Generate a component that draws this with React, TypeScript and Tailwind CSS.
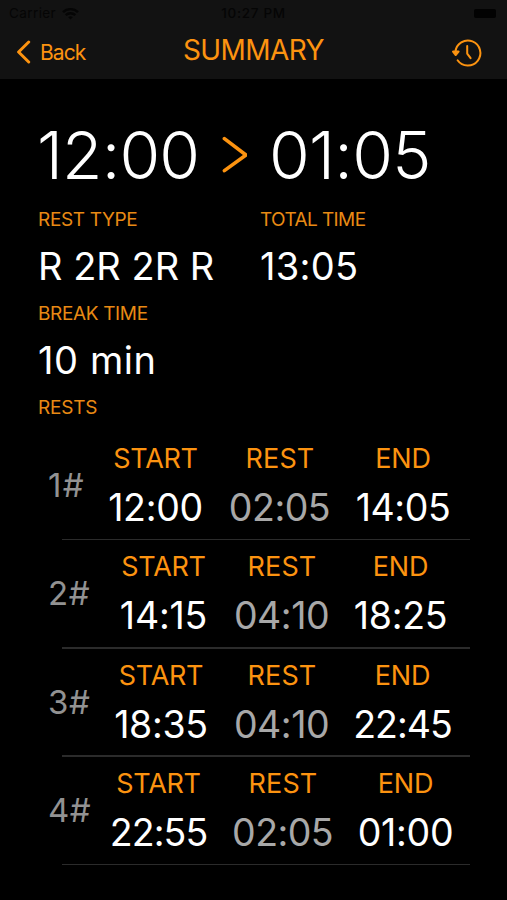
import clsx from "clsx";

type Cell = {
  value: string
  // box of the column and the tracking of the time in it
  box: string
  spacing: string
}

type RestRow = {
  id: number
  label: string
  labelBox: string
  cells: Cell[]
}

const columnTitles = ["START", "REST", "END"]
const titleSpacing = ["tracking-[-0.3px]", "tracking-[0.1px] pl-px", "tracking-[-0.2px]"]

const rests: RestRow[] = [
  {
    id: 1,
    label: "1#",
    labelBox: "w-[61px] tracking-[1.4px]",
    cells: [
      {value: "12:00", box: "w-[93px]", spacing: "tracking-[-0.3px]"},
      {value: "02:05", box: "ml-[28px] w-[99px]", spacing: "tracking-[-0.5px]"},
      {value: "14:05", box: "ml-[27px] w-[94px]", spacing: "tracking-[-0.4px]"},
    ],
  },
  {
    id: 2,
    label: "2#",
    labelBox: "w-[72px] tracking-[0.5px]",
    cells: [
      {value: "14:15", box: "w-[87px]", spacing: "tracking-[-0.2px]"},
      {value: "04:10", box: "ml-[27px] w-[95px]", spacing: "tracking-[-0.5px]"},
      {value: "18:25", box: "ml-[25px] w-[93px]", spacing: "tracking-[-0.3px]"},
    ],
  },
  {
    id: 3,
    label: "3#",
    labelBox: "w-[66px] tracking-[0.5px]",
    cells: [
      {value: "18:35", box: "w-[94px]", spacing: "tracking-[-0.3px]"},
      {value: "04:10", box: "ml-[26px] w-[95px]", spacing: "tracking-[-0.5px]"},
      {value: "22:45", box: "ml-[25px] w-[97px]", spacing: "tracking-[-1px]"},
    ],
  },
  {
    id: 4,
    label: "4#",
    labelBox: "w-[62px] tracking-[0.5px]",
    cells: [
      {value: "22:55", box: "w-[97px]", spacing: "tracking-[-0.9px]"},
      {value: "02:05", box: "ml-[26px] w-[99px]", spacing: "tracking-[-0.6px]"},
      {value: "01:00", box: "ml-[26px] w-[95px]", spacing: "tracking-[-0.3px]"},
    ],
  },
]

const StatusBar = () => (
  <div className="grid h-[27px] grid-cols-3 items-center pl-[9px] pr-[11px] text-[13.5px] text-[#050505]">
    <div className="flex items-center gap-[6px]">
      <span className="tracking-[0.4px]">Carrier</span>
      <svg width="17" height="13" viewBox="0 0 17 13" fill="none" stroke="#050505" strokeWidth="2.4">
        <path d="M1 5.2a10.6 10.6 0 0 1 15 0"/>
        <path d="M3.7 8.2a6.8 6.8 0 0 1 9.6 0"/>
        <path d="M8.5 12.6 6.2 10.3a3.3 3.3 0 0 1 4.6 0Z" fill="#050505" stroke="none"/>
      </svg>
    </div>
    <span className="whitespace-nowrap pl-[2px] text-center font-medium tracking-[0.7px]">10:27 PM</span>
    <div className="h-[9px] w-[22px] justify-self-end rounded-[2px] bg-[#020202]"/>
  </div>
)

const Header = () => (
  <div className="h-[79px] bg-[#121212]">
    <StatusBar/>
    <div className="flex h-[50px] items-center text-[#fc9310]">
      <button className="flex w-[183px] items-center pl-[16px]">
        <svg width="15" height="24" viewBox="0 0 15 24" fill="none" stroke="currentColor" strokeWidth="3"
             strokeLinecap="round" strokeLinejoin="round">
          <path d="M12.7 2 2.6 12l10.1 10"/>
        </svg>
        <span className="ml-[9px] pt-px text-[21px] leading-6 tracking-[-0.9px]">Back</span>
      </button>
      <h1 className="-mt-[5px] w-[141px] text-[28px] leading-8 tracking-[-0.6px]">SUMMARY</h1>
      <svg className="ml-[127px] mt-px" width="32" height="30" viewBox="0 0 32 30" fill="none" stroke="currentColor"
           strokeWidth="2" strokeLinecap="round" strokeLinejoin="round">
        <path d="M4.4 14A12.5 12.5 0 1 1 6.6 22.2"/>
        <path d="M2.2 13.6h5.2L4.7 16.8Z" fill="currentColor" strokeWidth="2.4"/>
        <path d="M16.2 8v7.6l3.4 4.6"/>
      </svg>
    </div>
  </div>
)

const Field = ({label, value, labelSpacing, spacing}: {
  label: string
  value: string
  labelSpacing: string
  spacing: string
}) => (
  <div className="h-[94px]">
    <div className={clsx("h-[26px] whitespace-nowrap text-[19px] leading-[26px] text-[#e88a14]", labelSpacing)}>
      {label}
    </div>
    <div className={clsx("h-[68px] whitespace-nowrap text-[38px] leading-[67px] text-white", spacing)}>{value}</div>
  </div>
)

const RestItem = ({row}: {row: RestRow}) => (
  <div className="flex h-[108.3px] flex-col">
    <div className="flex flex-1 pl-[48px]">
      <div className={clsx("pt-[33px] text-[33px] leading-[40px] text-[#929292]", row.labelBox)}>{row.label}</div>
      {row.cells.map((cell, idx) => (
        <div key={idx} className={clsx("flex flex-col items-center whitespace-nowrap", cell.box)}>
          <span className={clsx("mt-[11px] text-[27px] leading-[32px] text-[#fc9310]", titleSpacing[idx])}>
            {columnTitles[idx]}
          </span>
          <span
            className={clsx("mt-[13px] text-[37.5px] leading-[40px]", cell.spacing, idx === 1 ? "text-[#a8a8a8]" : "text-white")}>
            {cell.value}
          </span>
        </div>
      ))}
    </div>
    <div className="ml-[62px] mr-[37px] h-[1.5px] bg-[#2b2b2b]"/>
  </div>
)

export default function App() {
  return (
    <div className="h-[900px] w-[507px] overflow-hidden bg-black font-['Inter',sans-serif]">
      <Header/>
      <div
        className="flex h-[128px] items-center pl-[37px] pt-[24px] text-[66px] font-light leading-none text-white">
        <span className="w-[184px] whitespace-nowrap tracking-[-0.9px]">12:00</span>
        <svg width="26" height="38" viewBox="0 0 26 38" fill="none" stroke="#fc9310" strokeWidth="3.6"
             strokeLinecap="round" strokeLinejoin="round">
          <path d="M3.4 2.6 25 19 3.4 34.6"/>
        </svg>
        <span className="ml-[22px] whitespace-nowrap tracking-[-0.7px]">01:05</span>
      </div>
      <div className="flex pl-[38px]">
        <div className="w-[222px]">
          <Field label="REST TYPE" value="R 2R 2R R" labelSpacing="tracking-[-0.35px]" spacing="tracking-[0px]"/>
        </div>
        <Field label="TOTAL TIME" value="13:05" labelSpacing="tracking-[-0.6px]" spacing="tracking-[0.3px]"/>
      </div>
      <div className="pl-[38px]">
        <Field label="BREAK TIME" value="10 min" labelSpacing="tracking-[-0.35px]" spacing="tracking-[0.6px]"/>
        <div className="h-[37px] text-[19px] leading-[26px] tracking-[-0.2px] text-[#e88a14]">RESTS</div>
      </div>
      {rests.map((row) => (
        <RestItem key={row.id} row={row}/>
      ))}
    </div>
  )
}
